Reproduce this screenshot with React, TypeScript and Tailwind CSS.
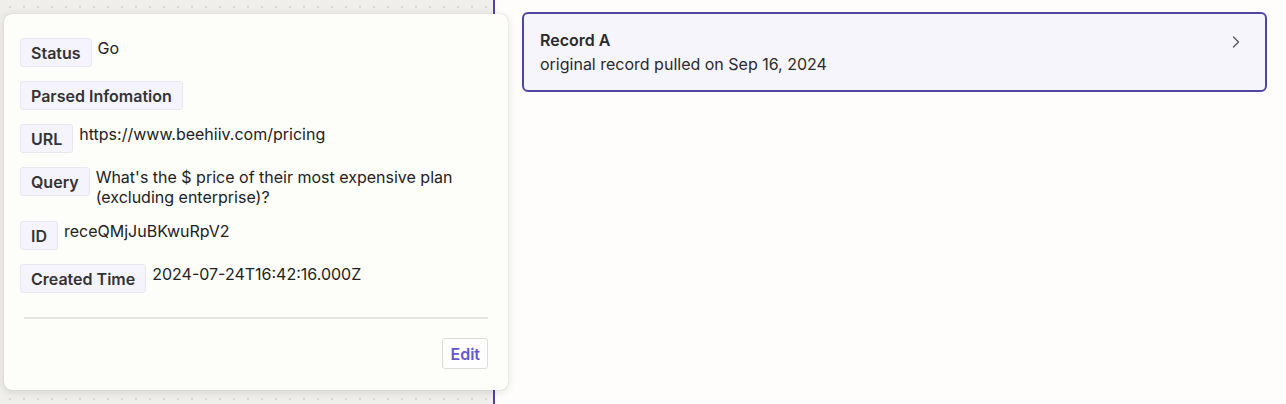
import { ChevronRight } from 'lucide-react'

// -----------------------------------------------------------------------------
// Data
// -----------------------------------------------------------------------------

const fields: { label: string; value?: string }[] = [
  { label: 'Status', value: 'Go' },
  { label: 'Parsed Infomation' },
  { label: 'URL', value: 'https://www.beehiiv.com/pricing' },
  { label: 'Query', value: "What's the $ price of their most expensive plan (excluding enterprise)?" },
  { label: 'ID', value: 'receQMjJuBKwuRpV2' },
  { label: 'Created Time', value: '2024-07-24T16:42:16.000Z' },
]

// -----------------------------------------------------------------------------
// Components
// -----------------------------------------------------------------------------

function FieldRow({ label, value }: { label: string; value?: string }) {
  return (
    <div className="flex items-start gap-1.5">
      <span className="shrink-0 h-[29px] px-[10px] pt-[4px] rounded-[3px] border border-[#e9e7f4] bg-[#f5f4fc] text-[16px] leading-5 font-semibold text-[#333333]">
        {label}
      </span>
      {value && (
        <span className="text-[16px] leading-5 text-[#222222] max-w-[380px]">{value}</span>
      )}
    </div>
  )
}

function DetailPopover() {
  return (
    <div className="absolute left-[4px] top-[14px] z-10 w-[504px] h-[376px] rounded-lg bg-[#fdfdf9] shadow-[0_2px_8px_rgba(0,0,0,0.12),0_0_1px_rgba(0,0,0,0.2)] pt-6 px-4 flex flex-col">
      <div className="flex flex-col gap-3.5">
        {fields.map(f => (
          <FieldRow key={f.label} label={f.label} value={f.value} />
        ))}
      </div>
      <div className="mx-1 mt-[24px] h-[2px] bg-[#e6e5e1]" />
      <div className="flex justify-end mt-[19px] mr-1">
        <button className="h-[31px] px-[7px] rounded-[3px] border border-[#dddcd8] bg-white text-[16px] font-semibold text-[#6656cf]">
          Edit
        </button>
      </div>
    </div>
  )
}

export default function App() {
  return (
    <div className="relative flex h-[404px] w-full overflow-hidden font-['Inter',_sans-serif]">
      {/* Canvas */}
      <div className="w-[495px] shrink-0 border-r-2 border-[#4d43a0] bg-[#efeeea] bg-[radial-gradient(#dad8d3_1px,transparent_1.2px)] bg-[size:14px_14px] bg-[position:3px_0px]" />

      <DetailPopover />

      {/* Records list */}
      <div className="flex-1 bg-[#fefdfb] pt-3 pl-[27px] pr-[19px]">
        <div className="flex items-start justify-between h-[80px] rounded-md border-2 border-[#5046a0] bg-[#f6f5fc] pl-4 pr-[19px] pt-[14px]">
          <div className="text-[16px] leading-6 text-[#2a2a2a]">
            <div className="font-semibold">Record A</div>
            <div>original record pulled on Sep 16, 2024</div>
          </div>
          <ChevronRight className="mt-[4px] w-[20px] h-[20px] text-[#555555]" strokeWidth={1.5} />
        </div>
      </div>
    </div>
  )
}
